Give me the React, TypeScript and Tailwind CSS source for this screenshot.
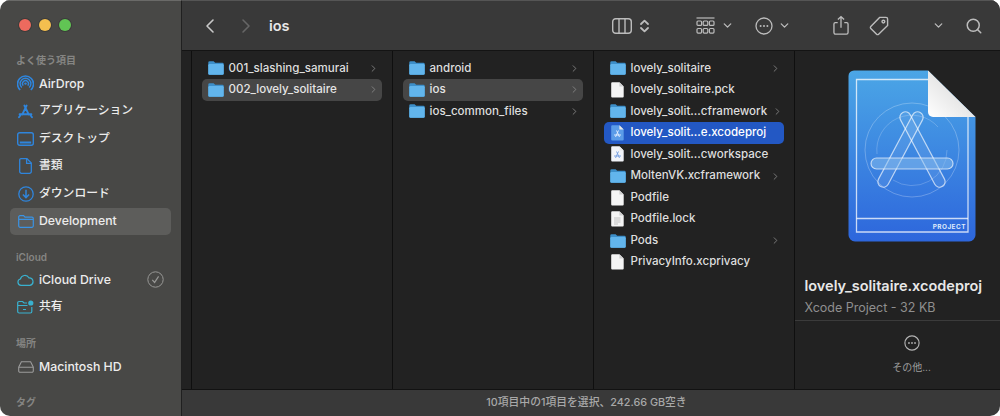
import React from 'react';
import { ChevronLeft, ChevronRight, ChevronDown, Search } from 'lucide-react';

const font = "font-['Inter','Noto_Sans_CJK_JP',sans-serif]";

const FolderIcon = () => (
  <svg width="16" height="14" viewBox="0 0 16 14" className="shrink-0">
    <path d="M1.6 0.3H5.6L7.2 1.8H14.4A1.3 1.3 0 0 1 15.7 3.1V12.4A1.3 1.3 0 0 1 14.4 13.7H1.6A1.3 1.3 0 0 1 0.3 12.4V1.6A1.3 1.3 0 0 1 1.6 0.3Z" fill="#3d8fc9" />
    <path d="M0.3 4.2A1.2 1.2 0 0 1 1.5 3H14.5A1.2 1.2 0 0 1 15.7 4.2V12.4A1.3 1.3 0 0 1 14.4 13.7H1.6A1.3 1.3 0 0 1 0.3 12.4Z" fill="#62b5ec" />
  </svg>
);

const DocIcon = ({ lines }: { lines?: boolean }) => (
  <svg width="13" height="16" viewBox="0 0 13 16" className="shrink-0 mx-[1.5px]">
    <path d="M1.2 0.3H8.4L12.7 4.6V14.6A1 1 0 0 1 11.7 15.6H1.2A1 1 0 0 1 0.2 14.6V1.3A1 1 0 0 1 1.2 0.3Z" fill="#f4f4f4" />
    <path d="M8.4 0.3V4.6H12.7Z" fill="#cfcfcf" />
    {lines && <path d="M3 7H9.5M3 9H9.5M3 11H9.5M3 13H7" stroke="#b5b5b5" strokeWidth="0.8" />}
  </svg>
);

const XcodeSmall = ({ kind }: { kind: 'proj' | 'work' }) => (
  <svg width="13" height="16" viewBox="0 0 13 16" className="shrink-0 mx-[1.5px]">
    <path d="M1.2 0.3H8.4L12.7 4.6V14.6A1 1 0 0 1 11.7 15.6H1.2A1 1 0 0 1 0.2 14.6V1.3A1 1 0 0 1 1.2 0.3Z" fill={kind === 'proj' ? '#5b9ce8' : '#f1f3f8'} />
    <path d="M8.4 0.3V4.6H12.7Z" fill="#e8e8e8" />
    <path d="M5.5 5.5L8.5 12M7.5 5.5L4.5 12M3 10H10" stroke={kind === 'proj' ? '#e6f0ff' : '#6f9be0'} strokeWidth="0.9" fill="none" />
  </svg>
);

type Row = { name: string; icon: 'folder' | 'doc' | 'lines' | 'proj' | 'work'; more?: boolean; state?: 'sel' | 'active' };

const RowIcon = ({ icon }: { icon: Row['icon'] }) => {
  if (icon === 'folder') return <FolderIcon />;
  if (icon === 'doc') return <DocIcon />;
  if (icon === 'lines') return <DocIcon lines />;
  return <XcodeSmall kind={icon} />;
};

const FileRow = ({ row }: { row: Row }) => (
  <div
    className={`h-[21.56px] ml-[9.5px] mr-[10.5px] pl-[6px] pr-[3px] flex items-center gap-[5px] rounded-[5px] text-[11.55px] font-medium leading-none ${
      row.state === 'active' ? 'bg-[#2358c4] text-white' : row.state === 'sel' ? 'bg-[#464646] text-[#e4e4e4]' : 'text-[#dedede]'
    }`}
  >
    <RowIcon icon={row.icon} />
    <span className="flex-1 whitespace-nowrap">{row.name}</span>
    {row.more && <ChevronRight size={11} strokeWidth={1.8} className="text-[#8a8a8a] shrink-0" />}
  </div>
);

const Column = ({ rows }: { rows: Row[] }) => (
  <div className="w-[201px] shrink-0 border-r border-[#0f0f0f] pt-[6.5px]">
    {rows.map((r) => (
      <FileRow key={r.name} row={r} />
    ))}
  </div>
);

const col1: Row[] = [
  { name: '001_slashing_samurai', icon: 'folder', more: true },
  { name: '002_lovely_solitaire', icon: 'folder', more: true, state: 'sel' },
];
const col2: Row[] = [
  { name: 'android', icon: 'folder', more: true },
  { name: 'ios', icon: 'folder', more: true, state: 'sel' },
  { name: 'ios_common_files', icon: 'folder', more: true },
];
const col3: Row[] = [
  { name: 'lovely_solitaire', icon: 'folder', more: true },
  { name: 'lovely_solitaire.pck', icon: 'doc' },
  { name: 'lovely_solit...cframework', icon: 'folder', more: true },
  { name: 'lovely_solit...e.xcodeproj', icon: 'proj', state: 'active' },
  { name: 'lovely_solit...cworkspace', icon: 'work' },
  { name: 'MoltenVK.xcframework', icon: 'folder', more: true },
  { name: 'Podfile', icon: 'doc' },
  { name: 'Podfile.lock', icon: 'lines' },
  { name: 'Pods', icon: 'folder', more: true },
  { name: 'PrivacyInfo.xcprivacy', icon: 'doc' },
];

const blue = '#2f85dc';

const sideIcons: Record<string, React.ReactNode> = {
  airdrop: (
    <svg width="17" height="17" viewBox="0 0 17 17" fill="none" stroke={blue} strokeWidth="1.4">
      <path d="M3.2 15A8 8 0 1 1 13.8 15" strokeWidth="1.6" />
      <path d="M4.8 12.6A5.4 5.4 0 1 1 12.2 12.6" />
      <path d="M6.2 10.6A3 3 0 1 1 10.8 10.6" />
      <circle cx="8.5" cy="8.6" r="1.2" fill={blue} stroke="none" />
    </svg>
  ),
  apps: (
    <svg width="17" height="17" viewBox="0 0 17 17" fill="none" stroke={blue} strokeWidth="1.9" strokeLinecap="round">
      <path d="M7.4 2.6L11.8 11.6M9.6 2.6L5.2 11.6M2.6 11.2H14.4M2 14.2L3.4 12.2M15 14.2L13.6 12.2" />
    </svg>
  ),
  desktop: (
    <svg width="17" height="14" viewBox="0 0 17 14" fill="none" stroke={blue} strokeWidth="1.4">
      <rect x="0.7" y="0.7" width="15.6" height="12.6" rx="2" />
      <path d="M2.8 10.4H14.2" strokeWidth="2" />
    </svg>
  ),
  doc: (
    <svg width="13" height="16" viewBox="0 0 13 16" fill="none" stroke={blue} strokeWidth="1.3">
      <path d="M2 0.7H8L12.3 5V13.5A1.8 1.8 0 0 1 10.5 15.3H2.5A1.8 1.8 0 0 1 0.7 13.5V2A1.3 1.3 0 0 1 2 0.7Z" />
      <path d="M7.6 0.9V5.4H12" />
    </svg>
  ),
  download: (
    <svg width="16" height="16" viewBox="0 0 16 16" fill="none" stroke={blue} strokeWidth="1.3">
      <circle cx="8" cy="8" r="7.2" />
      <path d="M8 3.8V11.4M4.9 8.4L8 11.6L11.1 8.4" strokeWidth="1.5" />
    </svg>
  ),
  folder: (
    <svg width="16" height="13" viewBox="0 0 16 13" fill="none" stroke="#3a93e4" strokeWidth="1.2">
      <path d="M2 0.7H5.6L7 2.2H14A1.4 1.4 0 0 1 15.3 3.6V10.8A1.5 1.5 0 0 1 13.8 12.3H2.2A1.5 1.5 0 0 1 0.7 10.8V2A1.3 1.3 0 0 1 2 0.7Z" />
      <path d="M0.8 4.4H15.2" />
    </svg>
  ),
  cloud: (
    <svg width="17" height="12" viewBox="0 0 17 12" fill="none" stroke="#39b1cf" strokeWidth="1.2">
      <path d="M4 11.3A3.2 3.2 0 0 1 3.4 5A4.6 4.6 0 0 1 11.9 3.8A3.8 3.8 0 0 1 13 11.3Z" />
    </svg>
  ),
  shared: (
    <svg width="17" height="14" viewBox="0 0 17 14" fill="none" stroke="#39b1cf" strokeWidth="1.2">
      <path d="M10 3H7L5.6 1.5H2A1.3 1.3 0 0 0 0.7 2.8V11.5A1.5 1.5 0 0 0 2.2 13H13.3A1.5 1.5 0 0 0 14.8 11.5V7" />
      <path d="M0.8 5.5H10.5M6 9.5H9" />
      <circle cx="13.8" cy="3" r="2.6" fill="#39b1cf" stroke="none" />
    </svg>
  ),
  hd: (
    <svg width="16" height="12" viewBox="0 0 16 12" fill="none" stroke="#9a9a9a" strokeWidth="1.1">
      <path d="M3.4 0.7H12.6L15.3 6.2V10A1.3 1.3 0 0 1 14 11.3H2A1.3 1.3 0 0 1 0.7 10V6.2Z" />
      <path d="M0.9 6.2H15.1" />
    </svg>
  ),
};

const SideLabel = ({ text, className }: { text: string; className: string }) => (
  <div className={`pl-[16px] text-[10px] leading-[14px] font-semibold text-[#858583] ${className}`}>{text}</div>
);

const SideItem = ({ icon, text, active, check, cjk }: { icon: string; text: string; active?: boolean; check?: boolean; cjk?: boolean }) => (
  <div
    className={`h-[27.5px] mx-[10px] pl-[7px] pr-[7px] flex items-center rounded-[5px] font-medium text-[#ececec] ${
      active ? 'bg-[#5d5d5b]' : ''
    } ${cjk ? 'text-[11.8px]' : 'text-[12.3px]'}`}
  >
    <span className="w-[17px] mr-[5px] flex items-center justify-center shrink-0">{sideIcons[icon]}</span>
    <span className="flex-1 whitespace-nowrap leading-none">{text}</span>
    {check && (
      <svg width="17" height="17" viewBox="0 0 17 17" fill="none" stroke="#979795" strokeWidth="1">
        <circle cx="8.5" cy="8.5" r="7.7" />
        <path d="M5.3 8.8L7.6 11.4L11.6 5.4" strokeWidth="1.2" />
      </svg>
    )}
  </div>
);

const XcodeProject = () => (
  <svg width="128" height="172" viewBox="0 0 128 172">
    <defs>
      <linearGradient id="page" x1="0" y1="0" x2="0" y2="1">
        <stop offset="0" stopColor="#4ba6e6" />
        <stop offset="1" stopColor="#2d66dc" />
      </linearGradient>
      <linearGradient id="fold" x1="0" y1="1" x2="1" y2="0">
        <stop offset="0" stopColor="#ffffff" />
        <stop offset="1" stopColor="#d0d0d0" />
      </linearGradient>
    </defs>
    <path d="M6 0.5H80L127.5 47V165A6.5 6.5 0 0 1 121 171.5H7A6.5 6.5 0 0 1 0.5 165V6A5.5 5.5 0 0 1 6 0.5Z" fill="url(#page)" />
    <g fill="none" stroke="#ffffff">
      <path d="M80 9.5H8.5V162H120V47" strokeWidth="1.3" strokeOpacity="0.75" />
      <path d="M8.5 148.5H120" strokeWidth="1.3" strokeOpacity="0.75" />
      <circle cx="64" cy="80" r="47" strokeWidth="1" strokeOpacity="0.25" />
      <path d="M29 84A35 35 0 0 1 90 57" strokeWidth="1" strokeOpacity="0.2" />
      <path d="M99 80A35 35 0 0 1 45 110" strokeWidth="1" strokeOpacity="0.2" />
      <g strokeWidth="1.2" strokeOpacity="0.65" fill="#ffffff" fillOpacity="0.08">
        <rect x="-5.5" y="-42" width="11" height="84" rx="5.5" transform="translate(74.5 79.5) rotate(-28)" />
        <rect x="-5.5" y="-42" width="11" height="84" rx="5.5" transform="translate(52.5 79.5) rotate(28)" />
        <rect x="23" y="88" width="82" height="11" rx="5.5" fill="#8cc0ee" fillOpacity="0.5" />
      </g>
    </g>
    <path d="M80 0.5L127.5 47H85A5 5 0 0 1 80 42Z" fill="url(#fold)" />
    <text x="118" y="159" textAnchor="end" fontSize="6.4" fontWeight="700" letterSpacing="0.5" fill="#dfeafb" fontFamily="Inter, sans-serif">PROJECT</text>
  </svg>
);

const MoreCircle = ({ size, color }: { size: number; color: string }) => (
  <svg width={size} height={size} viewBox="0 0 18 18" fill="none" stroke={color} strokeWidth="1.3">
    <circle cx="9" cy="9" r="8" />
    <circle cx="5.6" cy="9" r="1" fill={color} stroke="none" />
    <circle cx="9" cy="9" r="1" fill={color} stroke="none" />
    <circle cx="12.4" cy="9" r="1" fill={color} stroke="none" />
  </svg>
);

const Toolbar = () => (
  <div className="h-[51px] shrink-0 bg-[#393939] border-t border-t-[#555555] border-b border-b-[#141414] flex items-center text-[#bcbcbc]">
    <ChevronLeft size={24} strokeWidth={1.6} className="ml-[16px] text-[#c8c8c8]" />
    <ChevronRight size={24} strokeWidth={1.6} className="ml-[12px] text-[#666666]" />
    <span className="ml-[11px] text-[14.5px] font-semibold text-[#e8e8e8]">ios</span>
    <div className="flex-1" />
    <svg width="20" height="16" viewBox="0 0 20 16" fill="none" stroke="currentColor" strokeWidth="1.4">
      <rect x="0.7" y="0.7" width="18.6" height="14.6" rx="3" />
      <path d="M7 1V15M13 1V15" />
    </svg>
    <svg width="11" height="14" viewBox="0 0 11 14" fill="none" stroke="currentColor" strokeWidth="1.8" strokeLinecap="round" strokeLinejoin="round" className="ml-[6.5px]">
      <path d="M2 5L5.5 1.6L9 5M2 9L5.5 12.4L9 9" />
    </svg>
    <svg width="19" height="18" viewBox="0 0 19 18" fill="none" stroke="currentColor" strokeWidth="1.2" className="ml-[46.5px]">
      <path d="M0.5 1H18.5" />
      <rect x="1" y="4" width="4.6" height="4.4" rx="1" />
      <rect x="7.2" y="4" width="4.6" height="4.4" rx="1" />
      <rect x="13.4" y="4" width="4.6" height="4.4" rx="1" />
      <rect x="1" y="11.5" width="4.6" height="4.6" rx="1" />
      <rect x="7.2" y="11.5" width="4.6" height="4.6" rx="1" />
      <rect x="13.4" y="11.5" width="4.6" height="4.6" rx="1" />
    </svg>
    <ChevronDown size={13} strokeWidth={2.4} className="ml-[5.5px]" />
    <span className="ml-[21.5px] flex"><MoreCircle size={18} color="currentColor" /></span>
    <ChevronDown size={13} strokeWidth={2.4} className="ml-[4.5px]" />
    <svg width="16" height="21" viewBox="0 0 17 21" fill="none" stroke="currentColor" strokeWidth="1.4" className="ml-[42.5px]">
      <path d="M5 7.5H2.5A1.5 1.5 0 0 0 1 9V18A1.7 1.7 0 0 0 2.7 19.7H14.3A1.7 1.7 0 0 0 16 18V9A1.5 1.5 0 0 0 14.5 7.5H12" />
      <path d="M8.5 13V1.2M5.2 4.2L8.5 1L11.8 4.2" />
    </svg>
    <svg width="20" height="20" viewBox="0 0 20 20" fill="none" stroke="currentColor" strokeWidth="1.4" className="ml-[20px]">
      <path d="M10.6 1.4H17A1.6 1.6 0 0 1 18.6 3V9.4L9.6 18.2A1.4 1.4 0 0 1 7.6 18.2L1.8 12.4A1.4 1.4 0 0 1 1.8 10.4Z" />
      <circle cx="14.4" cy="5.6" r="1.4" />
    </svg>
    <ChevronDown size={13} strokeWidth={2.4} className="ml-[42.5px]" />
    <Search size={18} strokeWidth={2} className="ml-[20px] mr-[17.5px]" />
  </div>
);

export default function App() {
  return (
    <div className={`w-[1000px] h-[416px] bg-white overflow-hidden ${font}`}>
      <div className="h-full flex rounded-[10px] overflow-hidden">
        <aside className="w-[182px] shrink-0 bg-[#484846] border-t border-t-[#6a6a68] border-r border-r-[#202020]">
          <div className="flex gap-[8px] pl-[19px] pt-[18px]">
            <span className="w-[12px] h-[12px] rounded-full bg-[#ec6a5e] ring-1 ring-[#3c3c3a]" />
            <span className="w-[12px] h-[12px] rounded-full bg-[#f4bf4f] ring-1 ring-[#3c3c3a]" />
            <span className="w-[12px] h-[12px] rounded-full bg-[#61c554] ring-1 ring-[#3c3c3a]" />
          </div>
          <SideLabel text="よく使う項目" className="mt-[22px]" />
          <div className="mt-[3px]">
            <SideItem icon="airdrop" text="AirDrop" />
            <SideItem icon="apps" text="アプリケーション" cjk />
            <SideItem icon="desktop" text="デスクトップ" cjk />
            <SideItem icon="doc" text="書類" cjk />
            <SideItem icon="download" text="ダウンロード" cjk />
            <SideItem icon="folder" text="Development" active />
          </div>
          <SideLabel text="iCloud" className="mt-[15px]" />
          <div className="mt-[2px]">
            <SideItem icon="cloud" text="iCloud Drive" check />
            <SideItem icon="shared" text="共有" cjk />
          </div>
          <SideLabel text="場所" className="mt-[15px]" />
          <div className="mt-[3px]">
            <SideItem icon="hd" text="Macintosh HD" />
          </div>
          <SideLabel text="タグ" className="mt-[14px]" />
        </aside>
        <main className="flex-1 min-w-0 flex flex-col bg-[#393939]">
          <Toolbar />
          <div className="flex-1 min-h-0 flex bg-[#222222]">
            <div className="w-[10px] shrink-0 border-r border-[#0f0f0f]" />
            <Column rows={col1} />
            <Column rows={col2} />
            <Column rows={col3} />
            <div className="flex-1 min-w-0 flex flex-col items-center text-[#e8e8e8]">
              <div className="mt-[19px] ml-[28px] flex"><XcodeProject /></div>
              <div className="self-stretch mt-[36px] pl-[9.5px] pb-[5px] border-b border-[#3b3b3b]">
                <div className="text-[14.5px] font-semibold leading-[16px] whitespace-nowrap">lovely_solitaire.xcodeproj</div>
                <div className="mt-[7px] text-[12.5px] leading-[14px] text-[#8f8f8f]">Xcode Project - 32 KB</div>
              </div>
              <div className="mt-[14px] ml-[28px] flex"><MoreCircle size={16} color="#b2b2b2" /></div>
              <div className="mt-[10px] ml-[28px] text-[10px] leading-[12px] text-[#9d9d9d]">その他...</div>
            </div>
          </div>
          <div className="h-[27px] shrink-0 border-t border-[#121212] pr-[9px] flex items-center justify-center text-[10.8px] font-medium text-[#a8a8a8]">
            10項目中の1項目を選択、242.66 GB空き
          </div>
        </main>
      </div>
    </div>
  );
}
